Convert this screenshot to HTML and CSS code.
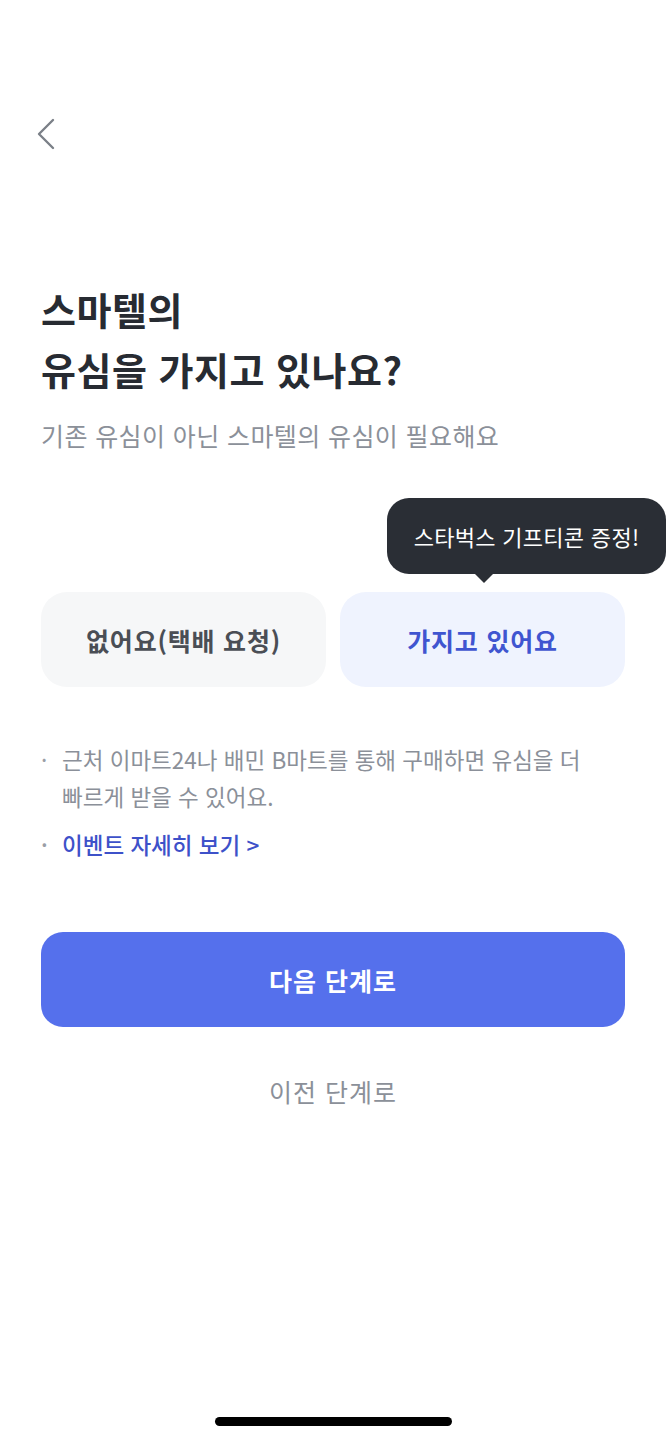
FILE: index.html
```html
<!DOCTYPE html>
<html lang="ko">
<head>
    <meta charset="UTF-8">
    <meta name="viewport" content="width=device-width, initial-scale=1.0">
    <title>유심 확인</title>
    <link rel="stylesheet" href="styles.css">
</head>
<body>
    <div class="screen">
        <div class="top-bar">
            <button class="back-btn" aria-label="뒤로">
                <svg width="20" height="32" viewBox="0 0 20 32">
                    <path d="M17 2 L3 16 L17 30" fill="none" stroke="#7b8088" stroke-width="2.4" stroke-linecap="round" stroke-linejoin="round"/>
                </svg>
            </button>
        </div>

        <div class="content">
            <h1 class="title">스마텔의<br>유심을 가지고 있나요?</h1>
            <p class="subtitle">기존 유심이 아닌 스마텔의 유심이 필요해요</p>

            <div class="options">
                <button class="option">없어요(택배 요청)</button>
                <button class="option selected">
                    가지고 있어요
                    <span class="tooltip">스타벅스 기프티콘 증정!</span>
                </button>
            </div>

            <ul class="notes">
                <li>근처 이마트24나 배민 B마트를 통해 구매하면 유심을 더 빠르게 받을 수 있어요.</li>
                <li class="link">이벤트 자세히 보기 &gt;</li>
            </ul>

            <button class="next-btn">다음 단계로</button>
            <button class="prev-btn">이전 단계로</button>
        </div>

        <div class="home-indicator"></div>
    </div>
</body>
</html>
```

FILE: styles.css
```css
* {
    margin: 0;
    padding: 0;
    box-sizing: border-box;
    font-family: "Noto Sans CJK KR", "Noto Sans", sans-serif;
}

body {
    background-color: #fff;
    color: #2b2f36;
    word-break: keep-all;
}

.screen {
    width: 666px;
    height: 1440px;
    display: flex;
    flex-direction: column;
    overflow: hidden;
}

button {
    border: none;
    background: none;
    cursor: pointer;
}

.top-bar {
    padding: 118px 0 0 36px;
    height: 152px;
}

.back-btn {
    display: block;
    width: 20px;
    height: 32px;
}

.content {
    padding: 0 41px;
    flex: 1;
}

.title {
    margin-top: 127px;
    font-size: 38px;
    font-weight: 700;
    line-height: 60px;
    letter-spacing: 0.5px;
    color: #272b32;
}

.subtitle {
    margin-top: 18px;
    font-size: 25px;
    line-height: 36px;
    color: #8b9099;
    letter-spacing: 0.4px;
}

.options {
    margin-top: 139px;
    display: flex;
    gap: 14px;
}

.option {
    position: relative;
    flex: 1;
    height: 95px;
    border-radius: 26px;
    background-color: #f6f7f8;
    font-size: 25px;
    font-weight: 700;
    color: #4a4e55;
    letter-spacing: 0.8px;
}

.option.selected {
    background-color: #eff3fe;
    color: #3f55d0;
}

.tooltip {
    position: absolute;
    top: -94px;
    right: -41px;
    width: 279px;
    height: 76px;
    border-radius: 22px;
    background-color: #2a2e35;
    color: #fff;
    font-size: 22px;
    font-weight: 400;
    line-height: 76px;
    text-align: center;
    letter-spacing: 0.3px;
}

.tooltip::after {
    content: "";
    position: absolute;
    left: 87px;
    bottom: -9px;
    border-left: 10px solid transparent;
    border-right: 10px solid transparent;
    border-top: 10px solid #2a2e35;
}

.notes {
    list-style: none;
    margin-top: 54px;
}

.notes li {
    position: relative;
    padding-left: 21px;
    font-size: 22.5px;
    line-height: 37px;
    color: #8b9099;
}

.notes li::before {
    content: "·";
    position: absolute;
    left: 0;
    top: 0;
    color: #9a9ea6;
}

.notes li.link {
    margin-top: 11px;
    color: #3d51c9;
    font-weight: 500;
}

.next-btn {
    display: block;
    width: 100%;
    height: 95px;
    margin-top: 69px;
    border-radius: 22px;
    background-color: #5570ec;
    color: #fff;
    font-size: 25px;
    font-weight: 700;
    letter-spacing: 1px;
}

.prev-btn {
    display: block;
    width: 100%;
    height: 40px;
    margin-top: 44px;
    font-size: 25px;
    color: #8b9099;
    letter-spacing: 1px;
}

.home-indicator {
    width: 237px;
    height: 9px;
    margin: 0 auto 14px;
    border-radius: 5px;
    background-color: #000;
}
```
